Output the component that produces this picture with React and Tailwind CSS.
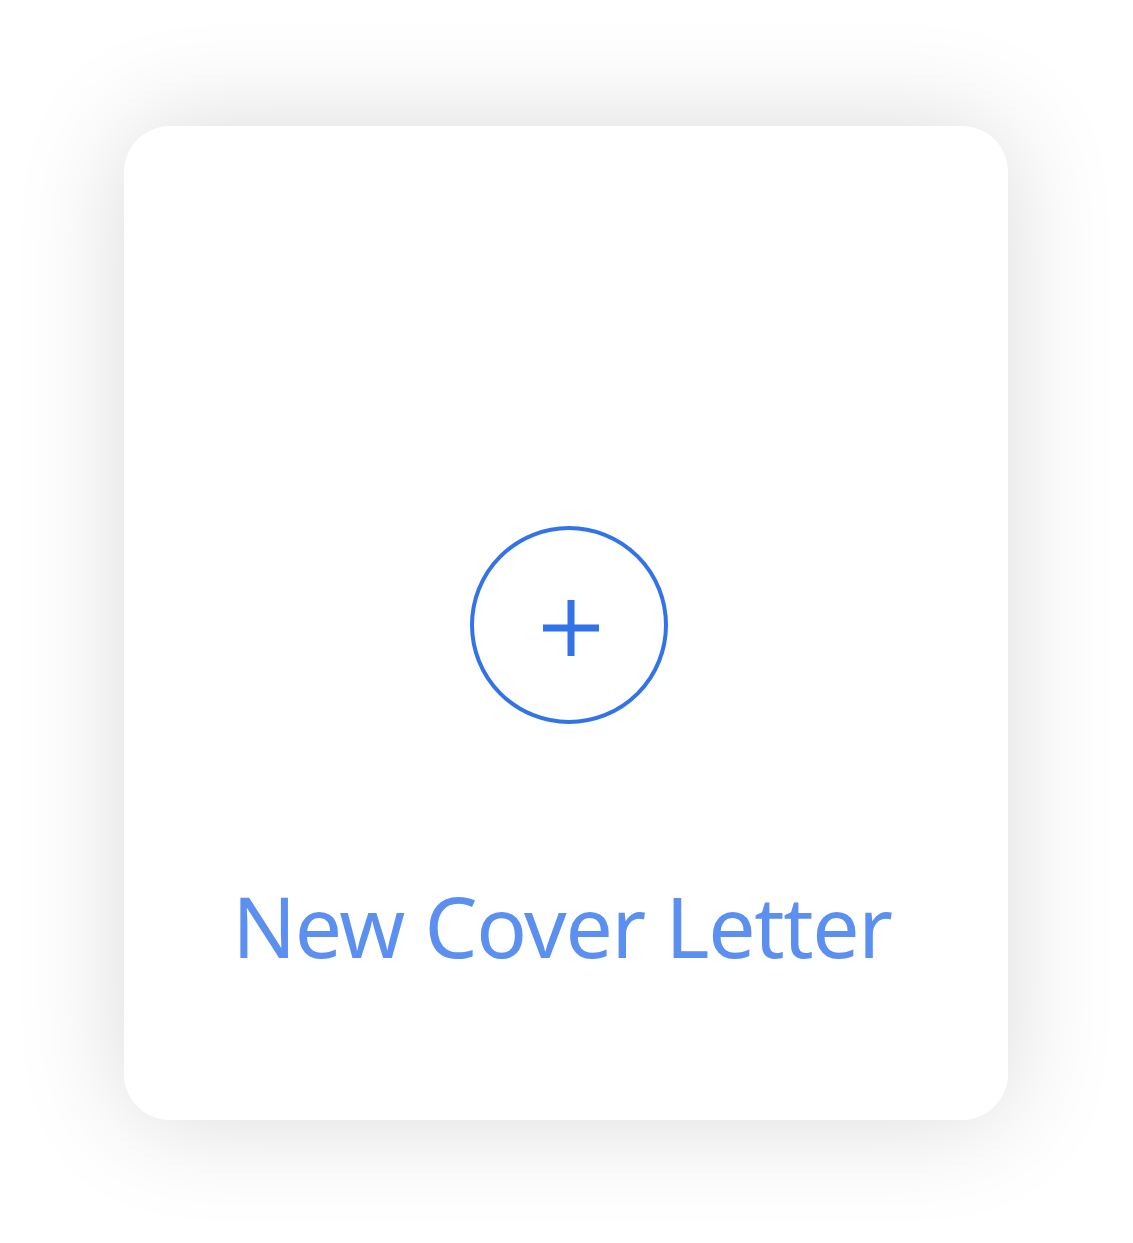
export default function App() {
  return (
    <div className="w-[1133px] h-[1243px] bg-white pt-[126px] pl-[124px]">
      <div className="w-[884px] h-[994px] bg-white rounded-[46px] shadow-[0_0_110px_rgba(0,0,0,0.15)] flex flex-col items-center pt-[400px]">
        <div className="ml-[6px] w-[198px] h-[198px] rounded-full border-[4px] border-[#3273ea] flex items-center justify-center">
          <svg width="56" height="56" viewBox="0 0 56 56" className="ml-[4px] mt-[5px]">
            <rect x="0" y="24.5" width="56" height="7" fill="#3273ea" />
            <rect x="24.5" y="0" width="7" height="56" fill="#3273ea" />
          </svg>
        </div>
        <div className="mt-[160px] mr-[8px] text-[84px] leading-none text-[#5b8ff0] tracking-[-1.3px]" style={{ fontFamily: '"Noto Sans", sans-serif' }}>
          New Cover Letter
        </div>
      </div>
    </div>
  );
}
